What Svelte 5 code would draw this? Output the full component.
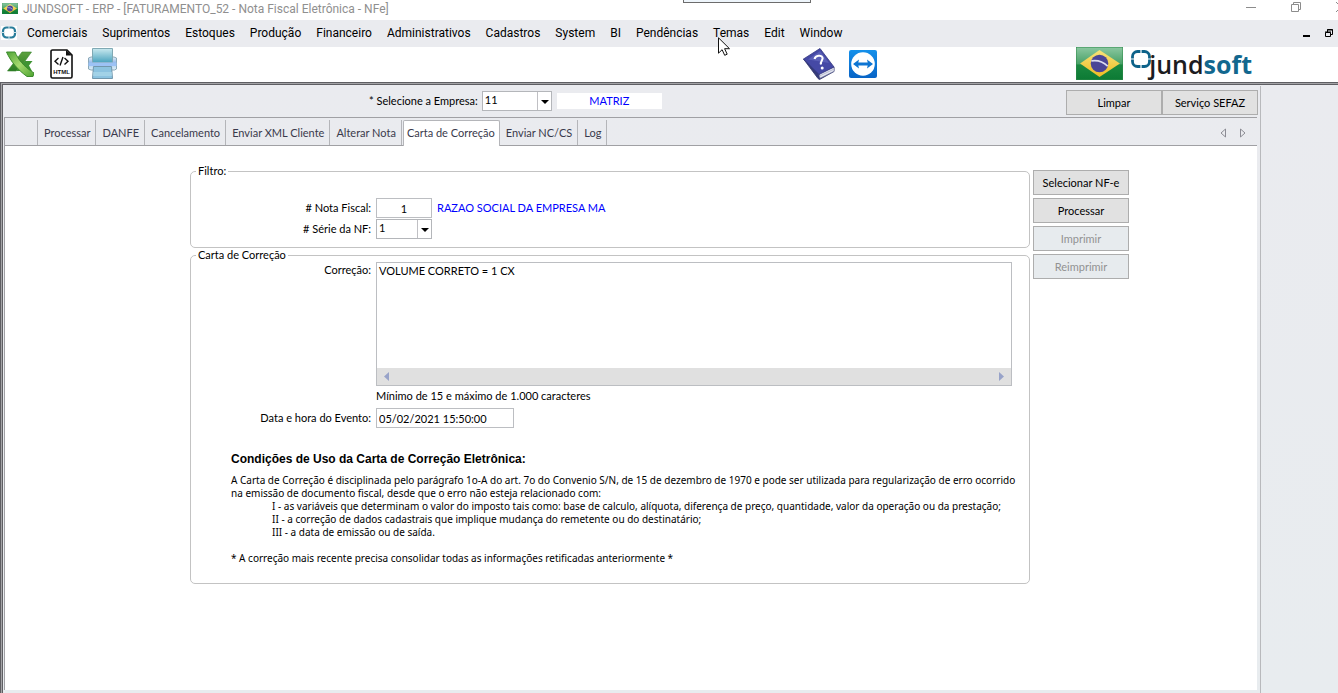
<script>
  const menus = ['Comerciais', 'Suprimentos', 'Estoques', 'Produção', 'Financeiro', 'Administrativos', 'Cadastros', 'System', 'BI', 'Pendências', 'Temas', 'Edit', 'Window'];
  const tabs = ['Processar', 'DANFE', 'Cancelamento', 'Enviar XML Cliente', 'Alterar Nota', 'Carta de Correção', 'Enviar NC/CS', 'Log'];
  const actions = [
    { label: 'Selecionar NF-e', disabled: false },
    { label: 'Processar', disabled: false },
    { label: 'Imprimir', disabled: true },
    { label: 'Reimprimir', disabled: true }
  ];

  let activeTab = $state('Carta de Correção');
  let empresa = $state('11');
  let nota = $state('1');
  let serie = $state('1');
  let correcao = $state('VOLUME CORRETO = 1 CX');
  let dataEvento = $state('05/02/2021 15:50:00');
</script>

{#snippet flag()}
  <svg viewBox="0 0 46 32" preserveAspectRatio="none" aria-hidden="true">
    <defs>
      <linearGradient id="verde" x1="0" y1="0" x2="0" y2="1">
        <stop offset="0" stop-color="#8cc8a2" />
        <stop offset="0.5" stop-color="#4aa268" />
        <stop offset="0.55" stop-color="#1a8840" />
        <stop offset="1" stop-color="#0c7a34" />
      </linearGradient>
      <linearGradient id="ouro" x1="0" y1="0" x2="0" y2="1">
        <stop offset="0" stop-color="#f6e27a" />
        <stop offset="1" stop-color="#eebc22" />
      </linearGradient>
    </defs>
    <rect width="46" height="32" fill="url(#verde)" stroke="#2f8a4c" />
    <path d="M23 3 43 16 23 29 4 16Z" fill="url(#ouro)" />
    <circle cx="23" cy="16" r="8.6" fill="#4a4596" />
    <path d="M15 13.5q9-1.500 16 5" fill="none" stroke="#dcdcf0" stroke-width="1.600" />
  </svg>
{/snippet}

<div class="app">
  <div class="peek"></div>
  <header class="titlebar">
    <span class="flag-small">{@render flag()}</span>
    <span class="title">JUNDSOFT - ERP - [FATURAMENTO_52 - Nota Fiscal Eletrônica - NFe]</span>
    <div class="window-buttons">
      <button aria-label="Minimizar"><svg width="10" height="10" viewBox="0 0 10 10"><path d="M0 5.500h10" stroke="#8c8c8c" /></svg></button>
      <button aria-label="Restaurar"><svg width="10" height="10" viewBox="0 0 10 10"><path d="M.5 2.500h7v7h-7zM2.500 2.500v-2h7v7h-2" fill="none" stroke="#8c8c8c" /></svg></button>
      <button aria-label="Fechar"><svg width="10" height="10" viewBox="0 0 10 10"><path d="M0 0l10 10M10 0L0 10" stroke="#8c8c8c" /></svg></button>
    </div>
  </header>

  <nav class="menubar">
    <svg class="mdi" width="16" height="14" viewBox="0 0 16 14" aria-hidden="true">
      <rect width="16" height="14" fill="#fff" />
      <rect x="2" y="1.500" width="12" height="10" rx="3.500" fill="none" stroke="#2a7d9b" stroke-width="2.200" />
      <path d="M8 0v3M8 10v4M0 6.500h3.500M12.500 6.500h4" stroke="#cfe2ea" />
    </svg>
    {#each menus as menu}
      <button class="menu">{menu}</button>
    {/each}
    <div class="mdi-buttons">
      <button aria-label="Minimizar janela"><svg width="8" height="8" viewBox="0 0 8 8"><path d="M0 7h7" stroke="#000" stroke-width="2" /></svg></button>
      <button aria-label="Restaurar janela"><svg width="8" height="8" viewBox="0 0 8 8"><path d="M.5 3.500h5v4h-5zM0 3h6M2.500 3V.5h5v5h-2M2 1h6" fill="none" stroke="#000" /></svg></button>
    </div>
  </nav>

  <div class="toolbar">
    <button aria-label="Excel">
      <svg width="28" height="26" viewBox="0 0 28 26">
        <defs>
          <linearGradient id="xl" x1="0" y1="0" x2="0" y2="1">
            <stop offset="0" stop-color="#5da13f" />
            <stop offset="1" stop-color="#2a7c23" />
          </linearGradient>
          <linearGradient id="xl2" x1="0" y1="0" x2="1" y2="1">
            <stop offset="0" stop-color="#4fa436" />
            <stop offset=".5" stop-color="#a5d96f" />
            <stop offset="1" stop-color="#4ca22f" />
          </linearGradient>
        </defs>
        <path d="M16 1h9.500L14 17l-4 3H1.500z" fill="url(#xl)" stroke="#39852f" stroke-width=".6" />
        <path d="M19 10h7.500L23 14.500 26 20H10z" fill="#3f9433" />
        <path d="M.5 1h8.500c3 7 8 14 19 21l-1 3.500h-6C12 19 5 11 .5 1z" fill="url(#xl2)" stroke="#3b8b2c" />
      </svg>
    </button>
    <button aria-label="HTML">
      <svg width="26" height="30" viewBox="0 0 26 30">
        <path d="M4.500 1H19l5 5v21.500a1.500 1.500 0 0 1-1.500 1.500h-18A1.500 1.500 0 0 1 3 27.500V2.500A1.500 1.500 0 0 1 4.500 1z" fill="#fff" stroke="#111" stroke-width="1.600" />
        <path d="M18 1v5.500h6z" fill="#111" />
        <path d="M10.500 9L7 12.200l3.500 3.300M16.500 9l3.500 3.200-3.500 3.300M15 8l-3 8.500" fill="none" stroke="#111" stroke-width="1.400" />
        <text x="13.500" y="25" text-anchor="middle" font-family="Liberation Sans, sans-serif" font-size="6" font-weight="700" fill="#111">HTML</text>
      </svg>
    </button>
    <button aria-label="Impressora">
      <svg width="29" height="31" viewBox="0 0 29 31">
        <defs>
          <linearGradient id="papel" x1="0" y1="0" x2="0" y2="1">
            <stop offset="0" stop-color="#c9e9ef" />
            <stop offset="1" stop-color="#4aa3be" />
          </linearGradient>
          <linearGradient id="corpo" x1="0" y1="0" x2="0" y2="1">
            <stop offset="0" stop-color="#e4f1f8" />
            <stop offset=".5" stop-color="#86aee6" />
            <stop offset=".6" stop-color="#b5d3ef" />
            <stop offset="1" stop-color="#e0f0f8" />
          </linearGradient>
        </defs>
        <path d="M3 9h23l2.500 1v11l-2 1H3l-2.500-1V10z" fill="url(#corpo)" stroke="#8ba9b8" />
        <path d="M4.500 .5h20v14h-20z" fill="url(#papel)" stroke="#80a9b4" />
        <path d="M.5 14.500h28v3.500H.5z" fill="#9cc2f5" />
        <path d="M5.500 18.500h18l1 12h-20z" fill="#8cc3e0" stroke="#7297ad" />
        <path d="M5 26h19" stroke="#b9e2ef" stroke-width="4" opacity=".5" />
      </svg>
    </button>
    <button class="help" aria-label="Ajuda">
      <svg width="32" height="32" viewBox="0 0 32 32">
        <path d="M.5 11L15 30.500l1.500 1L31 23.500V19L16 25z" fill="#343a78" stroke="#30346a" stroke-width=".8" />
        <path d="M16 25.500L31 19v4.300L17 30.200z" fill="#e4e6f0" stroke="#767ba3" stroke-width=".6" />
        <path d="M16.500 28L30.500 21.300" stroke="#a8acc4" stroke-width=".7" />
        <path d="M.5 11L17 .5 31 19 16 26.500z" fill="#4549a5" stroke="#333780" stroke-width=".8" />
        <path d="M5 11.500L17 3l9 12z" fill="#7075c7" opacity=".5" />
        <path d="M11.500 11c1-3.500 7-4.500 8-1.500 1 2.500-2.500 3.500-1.500 7" fill="none" stroke="#fff" stroke-width="2.100" />
        <circle cx="19.200" cy="20" r="1.500" fill="#fff" />
      </svg>
    </button>
    <button class="remote" aria-label="TeamViewer">
      <svg width="28" height="28" viewBox="0 0 28 28">
        <defs>
          <linearGradient id="tv" x1="0" y1="0" x2="0" y2="1">
            <stop offset="0" stop-color="#1590ea" />
            <stop offset="1" stop-color="#0864c6" />
          </linearGradient>
        </defs>
        <rect width="28" height="28" rx="2" fill="url(#tv)" />
        <circle cx="14" cy="14" r="11.800" fill="#fff" />
        <path d="M4 14l6-4.500-.7 3h9.400l-.7-3 6 4.500-6 4.500.7-3H9.300l.7 3z" fill="#0d75d3" />
      </svg>
    </button>
    <div class="brand">
      <span class="flag-large">{@render flag()}</span>
      <svg class="mark" width="20" height="18" viewBox="0 0 20 18" aria-hidden="true">
        <rect x="1.500" y="1.500" width="17" height="15" rx="5" fill="none" stroke="#0d6289" stroke-width="2.800" />
        <path d="M10 0v4M10 14v4M0 9h4M16 9h4" stroke="#fff" stroke-width="1.200" />
      </svg>
      <span class="brand-name">jund<b>soft</b></span>
    </div>
  </div>

  <div class="workspace">
    <main>
      <div class="company">
        <label for="empresa">* Selecione a Empresa:</label>
        <span class="combo">
          <select id="empresa" bind:value={empresa}><option>11</option></select>
          <i></i>
        </span>
        <output>MATRIZ</output>
        <div class="company-buttons">
          <button class="push">Limpar</button>
          <button class="push">Serviço SEFAZ</button>
        </div>
      </div>

      <div class="tabs" role="tablist">
        <span class="blank"></span>
        {#each tabs as tab}
          <button role="tab" class="tab" class:active={tab === activeTab} aria-selected={tab === activeTab} onclick={() => (activeTab = tab)}>{tab}</button>
        {/each}
        <div class="scrollers">
          <button aria-label="Abas anteriores"><svg width="6" height="10" viewBox="0 0 6 10"><path d="M5.500 1v8L1 5z" fill="none" stroke="#8c8c94" /></svg></button>
          <button aria-label="Próximas abas"><svg width="6" height="10" viewBox="0 0 6 10"><path d="M.5 1v8L5 5z" fill="none" stroke="#8c8c94" /></svg></button>
        </div>
      </div>

      <div class="page">
        <form>
          <fieldset class="filter">
            <legend>Filtro:</legend>
            <div class="row">
              <label for="nota"># Nota Fiscal:</label>
              <input id="nota" class="nota" bind:value={nota} />
              <span class="customer">RAZAO SOCIAL DA EMPRESA MA</span>
            </div>
            <div class="row">
              <label for="serie"># Série da NF:</label>
              <span class="combo serie">
                <select id="serie" bind:value={serie}><option>1</option></select>
                <i></i>
              </span>
            </div>
          </fieldset>

          <fieldset class="letter">
            <legend>Carta de Correção</legend>
            <div class="row top">
              <label for="correcao">Correção:</label>
              <div class="memo">
                <textarea id="correcao" bind:value={correcao}></textarea>
                <div class="hscroll">
                  <button type="button" aria-label="Rolar para a esquerda"><svg width="5" height="9" viewBox="0 0 5 9"><path d="M5 0v9L0 4.500z" fill="#98a3c9" /></svg></button>
                  <button type="button" aria-label="Rolar para a direita"><svg width="5" height="9" viewBox="0 0 5 9"><path d="M0 0v9l5-4.500z" fill="#98a3c9" /></svg></button>
                </div>
              </div>
            </div>
            <p class="hint">Mínimo de 15 e máximo de 1.000 caracteres</p>
            <div class="row">
              <label for="data">Data e hora do Evento:</label>
              <input id="data" class="data" bind:value={dataEvento} />
            </div>
            <section class="terms">
              <h2>Condições de Uso da Carta de Correção Eletrônica:</h2>
              <p>A Carta de Correção é disciplinada pelo parágrafo 1o-A do art. 7o do Convenio S/N, de 15 de dezembro de 1970 e pode ser utilizada para regularização de erro ocorrido<br />na emissão de documento fiscal, desde que o erro não esteja relacionado com:</p>
              <ul>
                <li>I - as variáveis que determinam o valor do imposto tais como: base de calculo, alíquota, diferença de preço, quantidade, valor da operação ou da prestação;</li>
                <li>II - a correção de dados cadastrais que implique mudança do remetente ou do destinatário;</li>
                <li>III - a data de emissão ou de saída.</li>
              </ul>
              <p>* A correção mais recente precisa consolidar todas as informações retificadas anteriormente *</p>
            </section>
          </fieldset>
        </form>

        <div class="actions">
          {#each actions as action}
            <button class="push" disabled={action.disabled}>{action.label}</button>
          {/each}
        </div>
      </div>
    </main>
    <aside></aside>
  </div>

  <svg class="cursor" width="12" height="19" viewBox="0 0 12 19" aria-hidden="true">
    <path d="M.5 .8v15.400l3.600-3.500 2.600 5.600 2.500-1.100-2.600-5.500h4.900z" fill="#fff" stroke="#111" />
  </svg>
</div>

<style>
  :global(body) {
    margin: 0;
    background: #fff;
  }
  .app {
    position: relative;
    display: flex;
    flex-direction: column;
    min-height: 100vh;
    overflow: hidden;
    font: 11px/14px Lato, Arial, sans-serif;
    color: #000;
  }
  .app * {
    box-sizing: border-box;
  }
  button,
  input,
  select,
  textarea {
    margin: 0;
    padding: 0;
    border: 0;
    border-radius: 0;
    background: none;
    font: inherit;
    color: inherit;
  }
  svg {
    display: block;
  }
  .peek {
    position: absolute;
    top: 0;
    left: 683px;
    width: 128px;
    height: 3px;
    border: solid #6c6c6c;
    border-width: 0 1px 1px;
    background: #eef5fb;
  }
  .cursor {
    position: absolute;
    top: 37px;
    left: 718px;
  }

  .titlebar {
    display: flex;
    height: 20px;
    padding-left: 2px;
    font: 12px/18px Roboto, 'Segoe UI', sans-serif;
    color: #8f8f8f;
  }
  .flag-small svg {
    width: 16px;
    height: 11px;
    margin: 3px 5px 0 0;
  }
  .window-buttons {
    display: flex;
    gap: 35px;
    margin: 2px -8px 0 auto;
    align-items: flex-start;
  }

  .menubar {
    display: flex;
    align-items: center;
    gap: 15px;
    height: 27px;
    padding: 0 5px 2px 1px;
    background: #eaebef;
    font: 12px/16px Roboto, 'Segoe UI', sans-serif;
  }
  .mdi {
    margin-right: -5px;
  }
  .mdi-buttons {
    display: flex;
    gap: 14px;
    margin-left: auto;
  }

  .toolbar {
    display: flex;
    align-items: center;
    height: 35px;
    gap: 14px;
    padding: 0 86px 2px 6px;
  }
  .help {
    margin-left: 672px;
  }
  .brand {
    display: flex;
    align-items: center;
    margin-left: auto;
  }
  .flag-large svg {
    width: 47px;
    height: 33px;
    margin-right: 8px;
  }
  .mark {
    align-self: flex-start;
    margin: 3px -2px 0 0;
  }
  .brand-name {
    color: #1c1c1f;
    font: 600 25px/30px 'Open Sans', sans-serif;
  }
  .brand-name b {
    font-weight: 700;
    color: #12678e;
  }

  .workspace {
    flex: 1;
    display: flex;
    border: 3px double #5f5f63;
    border-width: 3px 0 0 3px;
    background: linear-gradient(#eaebef, #e8ecef) padding-box, linear-gradient(#a3a3a6, #a3a3a6) border-box;
  }
  aside {
    width: 78px;
    margin: 1px 0 0 2px;
    border-left: 1px solid #b8b9bc;
  }
  main {
    flex: 1;
    display: flex;
    flex-direction: column;
    min-width: 0;
    padding: 0 0 3px 1px;
  }
  .company {
    display: flex;
    align-items: center;
    height: 32px;
    padding-left: 365px;
  }
  .company output {
    width: 105px;
    margin-left: 5px;
    line-height: 16px;
    text-align: center;
    background: #fff;
    color: #0000ff;
  }
  .company label {
    margin-right: 4px;
  }
  .company-buttons {
    display: flex;
    margin: 3px 0 0 auto;
  }
  .push {
    width: 96px;
    height: 25px;
    border: 1px solid #adadad;
    background: #e1e1e1;
  }
  .push:disabled {
    background: #e7ebee;
    color: #929292;
  }
  .combo {
    position: relative;
    display: block;
    width: 70px;
    height: 20px;
  }
  .combo select {
    appearance: none;
    width: 100%;
    height: 100%;
    padding: 0 0 2px 2px;
    border: 1px solid #b4b6ba;
    background: #fff;
  }
  .combo i {
    position: absolute;
    top: 1px;
    right: 1px;
    bottom: 1px;
    width: 14px;
    border-left: 1px solid #c0c0c4;
    pointer-events: none;
  }
  .combo i::after {
    content: '';
    position: absolute;
    top: 8px;
    left: 3px;
    border: 4px solid transparent;
    border-top-color: #000;
    border-bottom: 0;
  }

  .tabs {
    display: flex;
    height: 29px;
    margin-right: 1px;
    padding-top: 2px;
    border: solid #a0a0a4;
    border-width: 1px 0 1px 1px;
    color: #3a3a4c;
  }
  .blank {
    width: 33px;
    border-right: 1px solid #b4b5b9;
  }
  .tab {
    padding: 0 5px 0 6px;
    border-right: 1px solid #b4b5b9;
  }
  .tab.active {
    margin: 0 0 -1px 1px;
    padding: 0 4px 2px 3px;
    border: 1px solid #b4b5b9;
    border-bottom: 0;
    border-radius: 2px 2px 0 0;
    background: #fff;
  }
  .scrollers {
    display: flex;
    align-items: center;
    gap: 14px;
    margin: 0 11px 0 auto;
  }

  .page {
    flex: 1;
    display: flex;
    align-items: flex-start;
    gap: 3px;
    margin-right: 1px;
    padding: 18px 128px 0 185px;
    border-left: 1px solid #a0a0a4;
    background: #fff;
  }
  form {
    flex: 1;
    min-width: 0;
  }
  fieldset {
    min-width: 0;
    margin: 0;
    padding: 0 17px 0 0;
    border: 1px solid #c3c3c3;
    border-radius: 5px;
  }
  legend {
    margin-left: 5px;
    padding: 0 2px;
  }
  .filter {
    padding-top: 20px;
    padding-bottom: 7px;
  }
  .letter {
    padding-bottom: 18px;
  }
  .row {
    display: grid;
    grid-template-columns: 180px auto 1fr;
    column-gap: 5px;
    align-items: center;
    margin-bottom: 1px;
  }
  .row label {
    text-align: right;
  }
  .row.top {
    grid-template-columns: 180px 1fr;
    align-items: start;
  }
  .row.top label {
    padding-top: 1px;
  }
  .row input {
    height: 20px;
    border: 1px solid #bcbec2;
    padding: 0 2px;
  }
  .row .nota {
    width: 56px;
    text-align: center;
  }
  .row .data {
    width: 138px;
  }
  .serie {
    width: 56px;
  }
  .customer {
    width: 169px;
    overflow: hidden;
    white-space: nowrap;
    color: #0000ff;
  }
  .memo {
    border: 1px solid #bcbec2;
  }
  textarea {
    display: block;
    width: 100%;
    height: 105px;
    padding: 1px 2px;
    resize: none;
    overflow: hidden;
  }
  .hscroll {
    display: flex;
    justify-content: space-between;
    align-items: center;
    height: 17px;
    padding: 0 7px;
    background: #e0e0e0;
  }
  .hint {
    margin: 3px 0 5px 185px;
  }
  .terms {
    margin: 24px -17px 0 40px;
    font: 10px/13px 'Noto Sans', sans-serif;
  }
  .terms h2 {
    margin: 0 0 8px;
    font: 700 12px/14px 'Liberation Sans', Arial, sans-serif;
  }
  .terms p {
    margin: 0;
  }
  .terms ul {
    margin: 0 0 13px;
    padding-left: 41px;
    list-style: none;
  }
  .actions {
    display: grid;
    gap: 3px;
    padding-top: 6px;
  }
</style>
